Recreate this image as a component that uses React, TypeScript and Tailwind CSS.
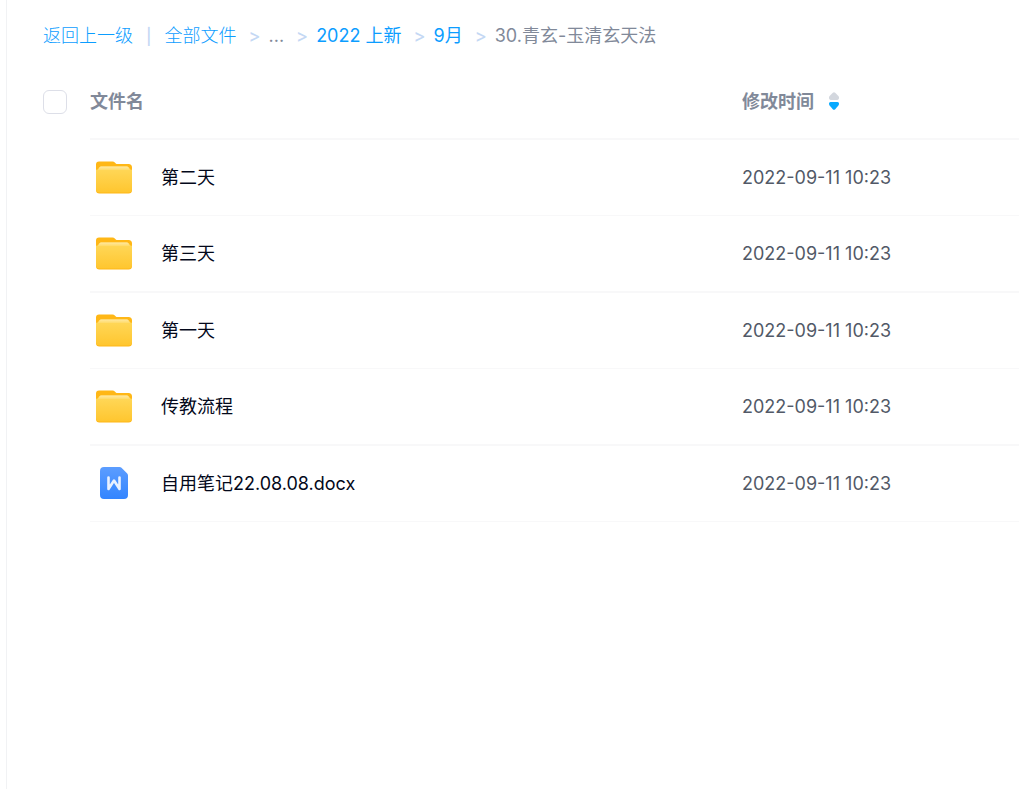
import React, { useState } from 'react';

type FileItem = {
  name: string;
  kind: 'folder' | 'doc';
  modified: string;
};

const files: FileItem[] = [
  { name: '第二天', kind: 'folder', modified: '2022-09-11 10:23' },
  { name: '第三天', kind: 'folder', modified: '2022-09-11 10:23' },
  { name: '第一天', kind: 'folder', modified: '2022-09-11 10:23' },
  { name: '传教流程', kind: 'folder', modified: '2022-09-11 10:23' },
  { name: '自用笔记22.08.08.docx', kind: 'doc', modified: '2022-09-11 10:23' },
];

// --- ICON COMPONENTS ---
const FolderIcon = () => (
  <svg className="w-12 h-12 shrink-0" viewBox="0 0 48 48" aria-hidden="true">
    <defs>
      <linearGradient id="folderFront" x1="0" y1="0" x2="0" y2="1">
        <stop offset="0" stopColor="#ffdc6b" />
        <stop offset="0.15" stopColor="#ffd655" />
        <stop offset="1" stopColor="#ffc62f" />
      </linearGradient>
      <linearGradient id="folderShine" x1="0" y1="0" x2="0" y2="1">
        <stop offset="0" stopColor="#ffe8a0" />
        <stop offset="1" stopColor="#ffdb68" />
      </linearGradient>
    </defs>
    <path d="M6 10.500A3 3 0 0 1 9 7.500h13.500c1 0 1.700.3 2.300 1l1 1c.4.400.9.600 1.500.600H38.500a3.500 3.500 0 0 1 3.500 3.500V36a3.500 3.500 0 0 1-3.500 3.500h-29A3.500 3.500 0 0 1 6 36z" fill="#ffb716" />
    <path d="M6 15.800c1.200 0 2-.3 2.600-1.500.6-1.100 1.300-1.700 2.900-1.700h25c1.600 0 2.300.6 2.900 1.700.6 1.200 1.400 1.500 2.600 1.500V35a3.500 3.500 0 0 1-3.500 3.500h-29A3.500 3.500 0 0 1 6 35z" fill="url(#folderFront)" />
    <path d="M8 16c1-.8 1.300-3.400 3.500-3.400h25c2.200 0 2.500 2.600 3.500 3.400z" fill="url(#folderShine)" />
  </svg>
);

const DocIcon = () => (
  <svg className="w-12 h-12 shrink-0" viewBox="0 0 48 48" aria-hidden="true">
    <defs>
      <linearGradient id="docBody" x1="0" y1="0" x2="0" y2="1">
        <stop offset="0" stopColor="#5c9dff" />
        <stop offset="1" stopColor="#3385ff" />
      </linearGradient>
    </defs>
    <path d="M10 11a4 4 0 0 1 4-4h15.500c.8 0 1.500.3 2 .8l5.500 5.500c.6.600 1 1.300 1 2.200V35a4 4 0 0 1-4 4H14a4 4 0 0 1-4-4z" fill="url(#docBody)" />
    <path d="M18.500 17.500v11.500L24 20.500l5.500 8.500V17.500" fill="none" stroke="#eaf2ff" strokeWidth="2.600" strokeLinecap="round" strokeLinejoin="round" />
  </svg>
);

const SortIcon = () => (
  <svg className="w-3 h-5" viewBox="0 0 12 20" aria-hidden="true">
    <path d="M4.800.8q1.200-1 2.400 0l3.200 3.300c1.200 1.300.7 3.900-1.200 3.900H2.800c-1.900 0-2.400-2.600-1.200-3.900z" fill="#d3d7de" />
    <path d="M4.800 17.200q1.200 1 2.400 0l3.200-3.700c1.200-1.500.7-3.500-1.200-3.500H2.800c-1.900 0-2.400 2-1.200 3.500z" fill="#09aaff" />
  </svg>
);
// --- END ICON COMPONENTS ---

const Arrow = () => <span className="ml-3 mr-2 font-medium text-[#c4d8f4]">&gt;</span>;

export default function App() {
  const [allChecked, setAllChecked] = useState(false);

  return (
    <div className="min-h-screen bg-white pl-1.5 font-['Inter','Noto_Sans_CJK_SC',sans-serif] text-lg">
      <main className="min-h-screen border-l border-[#f1f2f4] pl-9 pt-5">
        {/* Breadcrumb */}
        <nav className="flex h-8 items-center whitespace-nowrap text-[#0c9dff]">
          <a href="#" className="font-light">返回上一级</a>
          <span className="mx-[13px] text-base font-medium text-[#c4d8f4]">|</span>
          <a href="#" className="font-light">全部文件</a>
          <Arrow />
          <span className="text-[#818999]">...</span>
          <Arrow />
          <a href="#">2022 上新</a>
          <Arrow />
          <a href="#">9月</a>
          <Arrow />
          <span className="text-[#818999]">30.青玄-玉清玄天法</span>
        </nav>

        {/* File list */}
        <table className="mt-3.5 w-full table-fixed border-separate border-spacing-0">
          <thead>
            <tr className="h-[74px] text-left text-[#818999]">
              <th className="w-[47px] p-0 pb-0.5">
                <input
                  type="checkbox"
                  aria-label="全选"
                  checked={allChecked}
                  onChange={(e) => setAllChecked(e.target.checked)}
                  className="block h-6 w-6 appearance-none rounded-md border border-[#dddfe8] bg-white checked:border-[#06a7ff] checked:bg-[#06a7ff]"
                />
              </th>
              <th className="border-b-2 border-[#f8f8f9] p-0 font-bold">文件名</th>
              <th className="w-[277px] border-b-2 border-[#f8f8f9] p-0 font-bold">
                <button type="button" className="flex items-center gap-3.5 font-bold">
                  修改时间
                  <SortIcon />
                </button>
              </th>
            </tr>
          </thead>
          <tbody>
            {files.map((file) => (
              <tr key={file.name} className="group h-[76px] even:h-[77px]">
                <td className="p-0"></td>
                <td className="border-b border-[#f8f8f9] p-0 group-even:border-b-2">
                  <a href="#" className="flex items-center gap-[23px] text-[#03081a]">
                    {file.kind === 'folder' ? <FolderIcon /> : <DocIcon />}
                    <span className="truncate">{file.name}</span>
                  </a>
                </td>
                <td className="border-b border-[#f8f8f9] p-0 text-[#525967] group-even:border-b-2">
                  {file.modified}
                </td>
              </tr>
            ))}
          </tbody>
        </table>
      </main>
    </div>
  );
}
